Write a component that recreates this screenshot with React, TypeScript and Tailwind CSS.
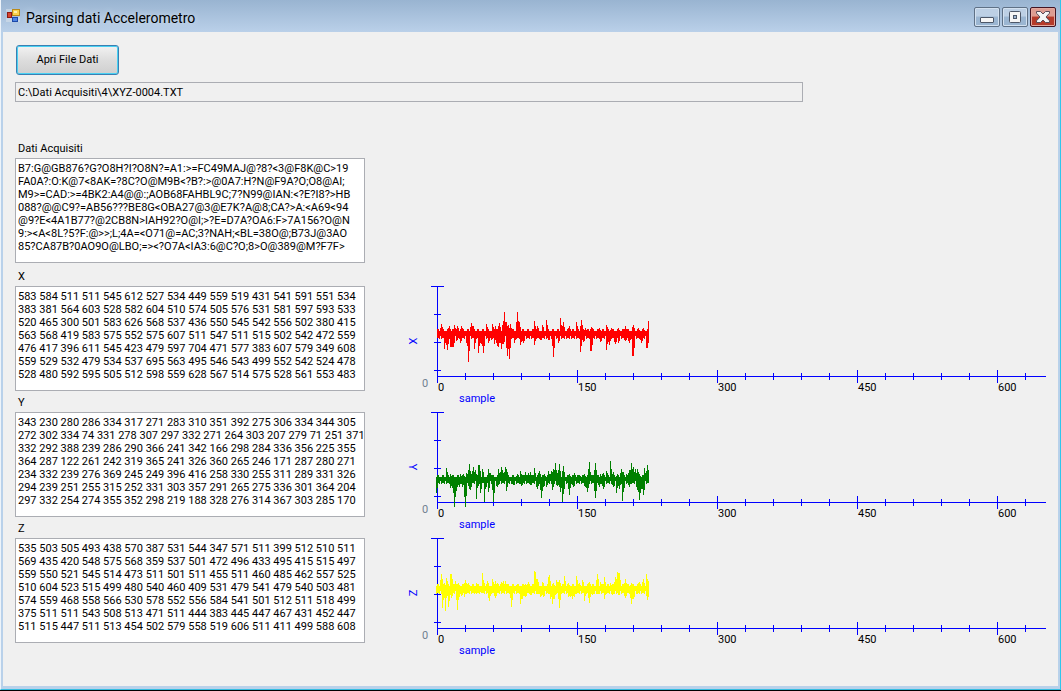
import React from "react";

type Spikes = Record<number, number>;

interface Channel {
  name: string;
  color: string;
  first: number;
  high: number;
  low: number;
  labelAngle: number;
  peaks: Spikes;
  dips: Spikes;
  values: string;
}

const RAW = `B7:G@GB876?G?O8H?I?O8N?=A1:>=FC49MAJ@?8?<3@F8K@C>19
FA0A?:O:K@7<8AK=?8C?O@M9B<?B?:>@0A7:H?N@F9A?O;O8@AI;
M9>=CAD:>=4BK2:A4@@:;AOB68FAHBL9C;7?N99@IAN:<?E?I8?>HB
088?@@C9?=AB56???BE8G<OBA27@3@E7K?A@8;CA?>A:<A69<94
@9?E<4A1B77?@2CB8N>IAH92?O@I;>?E=D7A?OA6:F>7A156?O@N
9:><A<8L?5?F:@>>;L;4A=<O71@=AC;3?NAH;<BL=38O@;B73J@3AO
85?CA87B?0AO9O@LBO;=><?O7A<IA3:6@C?O;8>O@389@M?F7F>`;

const CHANNELS: Channel[] = [
  {
    name: "X",
    color: "#ff0000",
    first: 0,
    high: 45,
    low: 50,
    labelAngle: -90,
    peaks: {
      4: 38, 12: 40, 17: 39, 20: 40, 24: 40, 34: 37, 36: 40, 49: 38, 55: 38, 58: 40, 62: 37, 66: 35, 67: 26,
      69: 36, 71: 39, 73: 38, 80: 26, 82: 36, 97: 35, 100: 40, 105: 39, 109: 34, 123: 32, 126: 36, 132: 40,
      139: 36, 144: 34, 148: 42, 154: 41, 162: 42, 169: 39, 174: 42, 181: 42, 188: 40, 196: 39, 201: 42,
      206: 42, 211: 35,
    },
    dips: {
      7: 63, 10: 64, 13: 61, 14: 61, 15: 61, 16: 61, 19: 55, 23: 57, 30: 60, 31: 76, 37: 63, 41: 67, 43: 57,
      44: 58, 46: 67, 51: 57, 54: 54, 57: 58, 60: 60, 61: 61, 64: 63, 66: 58, 69: 62, 70: 70, 71: 63, 72: 73,
      77: 57, 83: 59, 86: 57, 97: 59, 103: 54, 111: 54, 115: 60, 116: 71, 121: 57, 143: 66, 146: 56, 153: 65,
      154: 65, 163: 56, 169: 64, 172: 59, 178: 58, 181: 57, 188: 55, 192: 57, 195: 70, 196: 70, 204: 57,
      209: 62, 210: 62,
    },
    values: `583 584 511 511 545 612 527 534 449 559 519 431 541 591 551 534
383 381 564 603 528 582 604 510 574 505 576 531 581 597 593 533
520 465 300 501 583 626 568 537 436 550 545 542 556 502 380 415
563 568 419 583 575 552 575 607 511 547 511 515 502 542 472 559
476 417 396 611 545 423 479 597 704 471 577 383 607 579 349 608
559 529 532 479 534 537 695 563 495 546 543 499 552 542 524 478
528 480 592 595 505 512 598 559 628 567 514 575 528 561 553 483`,
  },
  {
    name: "Y",
    color: "#008000",
    first: -1,
    high: 65,
    low: 69,
    labelAngle: 90,
    peaks: {
      9: 56, 13: 62, 23: 62, 26: 62, 29: 61, 32: 52, 33: 59, 36: 55, 38: 58, 41: 53, 42: 53, 45: 57, 51: 57,
      53: 61, 61: 57, 64: 55, 65: 58, 68: 55, 69: 57, 80: 62, 83: 59, 88: 60, 91: 61, 93: 60, 97: 56, 102: 59,
      107: 62, 111: 59, 114: 59, 116: 57, 118: 51, 119: 58, 122: 52, 126: 54, 132: 62, 137: 61, 142: 63,
      147: 62, 152: 50, 153: 60, 158: 51, 163: 62, 166: 61, 169: 59, 173: 49, 176: 60, 180: 62, 184: 57,
      186: 60, 189: 62, 192: 58, 194: 51, 196: 55, 198: 57, 200: 57, 202: 62, 207: 56, 210: 53,
    },
    dips: {
      [-1]: 81, 13: 76, 16: 81, 17: 95, 18: 85, 20: 75, 22: 75, 25: 75, 27: 85, 28: 95, 32: 77, 33: 78, 39: 87,
      40: 76, 43: 81, 47: 90, 48: 77, 51: 80, 55: 78, 56: 90, 60: 75, 69: 79, 76: 73, 84: 74, 93: 73, 100: 77,
      104: 86, 106: 75, 109: 75, 115: 78, 120: 74, 122: 75, 123: 80, 125: 90, 126: 82, 132: 83, 136: 75,
      148: 75, 150: 80, 158: 86, 162: 75, 166: 77, 176: 75, 179: 81, 182: 77, 185: 89, 186: 80, 192: 75,
      200: 78, 202: 88, 203: 81, 206: 83,
    },
    values: `343 230 280 286 334 317 271 283 310 351 392 275 306 334 344 305
272 302 334 74 331 278 307 297 332 271 264 303 207 279 71 251 371
332 292 388 239 286 290 366 241 342 166 298 284 336 356 225 355
364 287 122 261 242 319 365 241 326 360 265 246 171 287 280 271
234 332 239 276 369 245 249 396 416 258 330 255 311 289 331 326
294 239 251 255 315 252 331 303 357 291 265 275 336 301 364 204
297 332 254 274 355 352 298 219 188 328 276 314 367 303 285 170`,
  },
  {
    name: "Z",
    color: "#ffff00",
    first: -1,
    high: 48,
    low: 53,
    labelAngle: -90,
    peaks: {
      4: 36, 7: 45, 9: 40, 13: 36, 14: 36, 18: 43, 21: 45, 28: 42, 31: 45, 39: 45, 45: 35, 46: 42, 50: 43,
      55: 41, 58: 43, 60: 45, 64: 44, 66: 43, 68: 43, 80: 46, 88: 46, 91: 44, 97: 33, 98: 34, 100: 41, 105: 44,
      111: 39, 112: 37, 116: 45, 119: 42, 122: 42, 127: 38, 131: 45, 139: 38, 142: 45, 145: 42, 152: 44,
      160: 36, 163: 44, 167: 39, 173: 45, 178: 39, 180: 34, 181: 35, 182: 35, 188: 41, 194: 45, 202: 44,
      206: 41, 209: 36, 211: 43,
    },
    dips: {
      5: 70, 6: 62, 7: 60, 8: 73, 9: 60, 11: 69, 14: 60, 19: 62, 20: 72, 21: 62, 24: 58, 27: 59, 38: 55, 44: 55,
      51: 60, 52: 63, 58: 60, 60: 55, 73: 60, 74: 69, 83: 66, 85: 61, 88: 59, 93: 57, 100: 56, 103: 59,
      106: 59, 111: 56, 113: 61, 115: 66, 117: 61, 121: 61, 122: 70, 131: 59, 133: 59, 135: 61, 137: 59,
      147: 63, 152: 65, 155: 57, 160: 56, 167: 61, 175: 57, 181: 57, 188: 60, 194: 66, 196: 61, 199: 56,
      209: 58, 210: 62,
    },
    values: `535 503 505 493 438 570 387 531 544 347 571 511 399 512 510 511
569 435 420 548 575 568 359 537 501 472 496 433 495 415 515 497
559 550 521 545 514 473 511 501 511 455 511 460 485 462 557 525
510 604 523 515 499 480 540 460 409 531 479 541 479 540 503 481
574 559 468 558 566 530 578 552 556 584 541 501 512 511 518 499
375 511 511 543 508 513 471 511 444 383 445 447 467 431 452 447
511 515 447 511 513 454 502 579 558 519 606 511 411 499 588 608`,
  },
];

const AXIS_X = 32;
const AXIS_TOP = 21;
const AXIS_Y = 111;
const LAST_COLUMN = 211;

// A column beside a spike carries about half of the spike's height.
function edge(spikes: Spikes, i: number, base: number, pick: (...n: number[]) => number): number {
  if (spikes[i] !== undefined) return spikes[i];
  const half = (n: number | undefined) => (n === undefined ? base : Math.round((base + n) / 2));
  return pick(base, half(spikes[i - 1]), i % 2 ? half(spikes[i + 1]) : base);
}

function tracePath(c: Channel): string {
  let d = "";
  for (let i = c.first; i <= LAST_COLUMN; i++) {
    const jitter = (i * 7 + i * i * 3 + 22) % 5;
    const top = edge(c.peaks, i, c.high - (jitter % 3), Math.min);
    const bottom = edge(c.dips, i, c.low + (jitter % 4), Math.max);
    d += `M${AXIS_X + i} ${AXIS_TOP + top}h1V${AXIS_TOP + bottom}h-1z`;
  }
  return d;
}

function Chart({ channel }: { channel: Channel }) {
  const ticks = Array.from({ length: 21 }, (_, i) => i + 1);
  return (
    <svg
      className="h-[126px] min-w-0 flex-1 overflow-visible text-[11px]"
      role="img"
      aria-label={`${channel.name} / sample`}
    >
      <g fill="#0000ff" shapeRendering="crispEdges">
        <rect x={AXIS_X} y={AXIS_TOP} width="1" height="97" />
        <line x1={AXIS_X} x2="100%" y1={AXIS_Y + 0.5} y2={AXIS_Y + 0.5} stroke="#0000ff" />
        <rect x={AXIS_X - 6} y={AXIS_TOP} width="13" height="1" />
        {[28, 56, 84].map((y) => (
          <rect key={y} x={AXIS_X - 3} y={AXIS_TOP + y} width="7" height="1" />
        ))}
        {ticks.map((i) => (
          <rect
            key={i}
            x={AXIS_X + i * 28}
            y={i % 5 === 0 ? AXIS_Y - 6 : AXIS_Y - 3}
            width="1"
            height={i % 5 === 0 ? 13 : 7}
          />
        ))}
      </g>
      <path d={tracePath(channel)} fill={channel.color} shapeRendering="crispEdges" />
      {[0, 150, 300, 450, 600].map((n, i) => (
        <text key={n} x={AXIS_X + 1 + i * 140} y="126" fill="#000000">
          {n}
        </text>
      ))}
      <text x="17" y="122" fill="#708090">
        0
      </text>
      <text x="54" y="137" fill="#0000ff">
        sample
      </text>
      <g transform={`translate(8 76) rotate(${channel.labelAngle})`}>
        <text textAnchor="middle" y="4" fill="#0000ff">
          {channel.name}
        </text>
      </g>
    </svg>
  );
}

function DataBox({ id, label, value }: { id: string; label: string; value: string }) {
  return (
    <div className="w-[350px] shrink-0">
      <label htmlFor={id} className="block h-[21px] pt-[5px] pl-[3px] leading-[14px]">
        {label}
      </label>
      <textarea
        id={id}
        readOnly
        wrap="off"
        defaultValue={value}
        className="block h-[105px] w-full resize-none overflow-hidden border border-[#abadb3] bg-white px-0.5 py-[3px] leading-[13px] outline-none"
      />
    </div>
  );
}

function CaptionButton({ label, close, children }: { label: string; close?: boolean; children: React.ReactNode }) {
  return (
    <button
      type="button"
      aria-label={label}
      className={
        close
          ? "flex h-5 w-[26px] items-center justify-center rounded-[2px] border border-[#431422] bg-linear-to-b from-[#dd9c91] from-45% to-[#b53a2a] to-50% shadow-[inset_0_0_0_1px_#e3a79d]"
          : "flex h-5 w-[26px] items-center justify-center rounded-[2px] border border-[#5f7186] bg-linear-to-b from-[#bdd0e5] from-45% to-[#9bb6d2] to-50% shadow-[inset_0_0_0_1px_#d3e1f0]"
      }
    >
      {children}
    </button>
  );
}

export default function App() {
  return (
    <main className="flex min-h-screen flex-col border-b border-black bg-[#b9d1ea] font-[Roboto,'Liberation_Sans',sans-serif] text-[11px] text-black">
      <div className="flex flex-1 flex-col border-r border-b border-l border-r-[#2fc6ec] border-b-[#35bde0] border-l-[#eef4fa]">
        <header className="flex h-8 items-center bg-linear-to-b from-[#99b4d1] to-[#bad0e9] pr-1 pl-[5px]">
          <svg width="14" height="14" viewBox="0 0 14 14" className="mr-1.5 shrink-0" aria-hidden="true" shapeRendering="crispEdges">
            <path d="M0 0h6v3H0zM0 9h6v4H0zM12 8h2v5h-2z" fill="#d6dfe9" opacity=".6" />
            <rect x="1" y="3" width="5" height="6" fill="#8e1c14" />
            <rect x="2" y="4" width="3" height="4" fill="#d8432f" />
            <rect x="6" y="0" width="8" height="7" fill="#b98a1a" />
            <rect x="7" y="1" width="6" height="5" fill="#fbd34c" />
            <rect x="8" y="2" width="3" height="2" fill="#ffefab" />
            <rect x="6" y="8" width="6" height="5" fill="#1d49a8" />
            <rect x="7" y="9" width="4" height="3" fill="#4d84e4" />
          </svg>
          <h1 className="flex-1 pt-1 text-[14px] leading-5 [text-shadow:0_0_6px_#dce8f5]">Parsing dati Accelerometro</h1>
          <div className="flex gap-0.5 pt-0.5">
            <CaptionButton label="Minimize">
              <svg width="14" height="14" viewBox="0 0 14 14" aria-hidden="true">
                <rect x="0.5" y="7.5" width="13" height="5" rx="0.5" fill="#f5f5f5" stroke="#4d5768" />
              </svg>
            </CaptionButton>
            <CaptionButton label="Maximize">
              <svg width="14" height="14" viewBox="0 0 14 14" aria-hidden="true">
                <rect x="1.5" y="1.5" width="11" height="11" rx="1" fill="#f5f5f5" stroke="#4d5768" />
                <rect x="5.5" y="5.5" width="3" height="3" fill="#9fb8d4" stroke="#4d5768" />
              </svg>
            </CaptionButton>
            <CaptionButton label="Close" close>
              <svg width="14" height="14" viewBox="0 0 14 14" aria-hidden="true">
                <path
                  d="M0.5 1.5h4L7 4l2.5-2.5h4v1.7L10 7l3.5 3.8v1.7h-4L7 10l-2.5 2.5h-4v-1.7L4 7 .5 3.2z"
                  fill="#f5f5f5"
                  stroke="#5a4b57"
                />
              </svg>
            </CaptionButton>
          </div>
        </header>

        <section className="mr-0.5 mb-[3px] ml-0.5 flex flex-1 flex-col bg-[#f0f0f0] pt-[13px] pr-3 pl-3">
          <button
            type="button"
            className="ml-px h-[30px] w-[103px] rounded-[3px] border border-[#3c7fb1] bg-linear-to-b from-[#f2f2f2] via-[#dddddd] via-50% to-[#cfcfcf] shadow-[inset_0_0_0_1px_#48d1f3]"
          >
            Apri File Dati
          </button>
          <input
            type="text"
            readOnly
            aria-label="File"
            defaultValue={"C:\\Dati Acquisiti\\4\\XYZ-0004.TXT"}
            className="mt-[7px] h-5 w-[788px] max-w-full border border-[#abadb3] bg-[#f0f0f0] px-0.5 outline-none"
          />

          <div className="mt-[35px]">
            <DataBox id="raw" label="Dati Acquisiti" value={RAW} />
          </div>
          <div className="mt-0.5">
            {CHANNELS.map((c) => (
              <div key={c.name} className="flex gap-10">
                <DataBox id={`axis-${c.name}`} label={c.name} value={c.values} />
                <Chart channel={c} />
              </div>
            ))}
          </div>
        </section>
      </div>
    </main>
  );
}
